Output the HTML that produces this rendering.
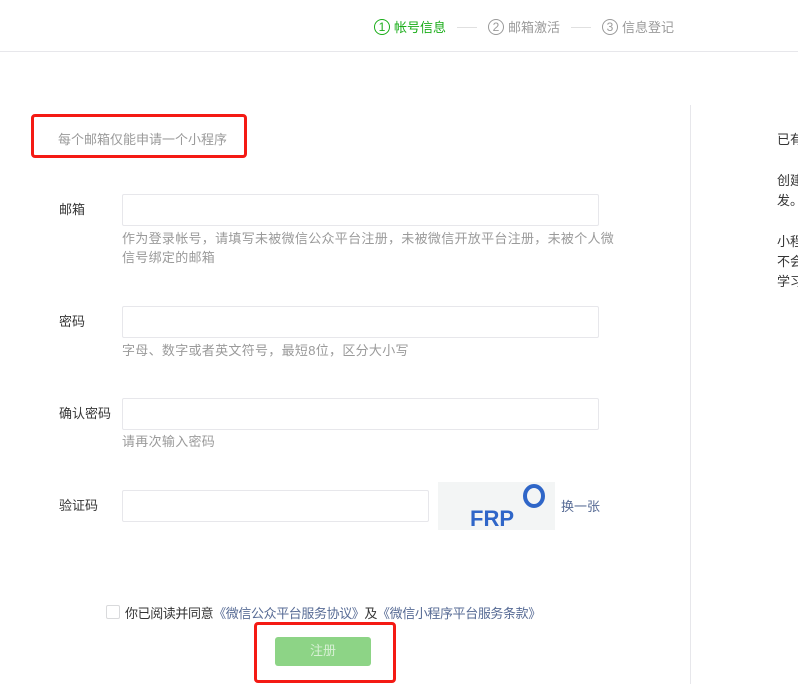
<!DOCTYPE html>
<html><head><meta charset="utf-8"><style>
*{margin:0;padding:0;box-sizing:border-box}
body{width:798px;height:684px;overflow:hidden;background:#fff;font-family:"Liberation Sans","Noto Sans CJK SC",sans-serif;font-size:13px;color:#353535;position:relative}
.a{position:absolute;white-space:nowrap}
.hd{position:absolute;left:0;top:0;width:798px;height:52px;border-bottom:1px solid #e7e7eb}
.step{position:absolute;top:17px;font-size:13px;color:#9a9a9a;display:flex;align-items:center}
.circ{display:inline-block;width:16px;height:16px;border:1px solid #9a9a9a;border-radius:50%;font-size:12px;line-height:14px;text-align:center;margin-right:4px}
.ln{position:absolute;top:27px;width:20px;height:1px;background:#e0e0e0}
.inp{position:absolute;border:1px solid #e7e7eb;border-radius:2px;height:32px;background:#fff}
.lab{position:absolute;left:59px;font-size:13px;color:#353535}
.tip{position:absolute;left:122px;color:#9a9a9a;font-size:13px;line-height:19px;letter-spacing:0.3px}
.red{position:absolute;border:3px solid #f41a14;border-radius:4px}
</style></head><body>
<div class="hd"></div>
<div class="step" style="left:374px;color:#1aad19"><span class="circ" style="border-color:#1aad19">1</span>帐号信息</div>
<div class="ln" style="left:457px"></div>
<div class="step" style="left:488px"><span class="circ">2</span>邮箱激活</div>
<div class="ln" style="left:571px"></div>
<div class="step" style="left:602px"><span class="circ">3</span>信息登记</div>

<div class="a" style="left:690px;top:105px;width:1px;height:579px;background:#e7e7eb"></div>
<div class="a" style="left:777px;top:129px">已有</div>
<div class="a" style="left:777px;top:171px;line-height:20px">创建<br>发。</div>
<div class="a" style="left:777px;top:232px;line-height:20px">小程<br>不会<br>学习</div>

<div class="red" style="left:31px;top:114px;width:216px;height:44px"></div>
<div class="a" style="left:58px;top:129px;color:#9a9a9a">每个邮箱仅能申请一个小程序</div>

<div class="lab" style="top:199px">邮箱</div>
<div class="inp" style="left:122px;top:194px;width:477px"></div>
<div class="tip" style="top:229px">作为登录帐号，请填写未被微信公众平台注册，未被微信开放平台注册，未被个人微<br>信号绑定的邮箱</div>

<div class="lab" style="top:311px">密码</div>
<div class="inp" style="left:122px;top:306px;width:477px"></div>
<div class="tip" style="top:341px">字母、数字或者英文符号，最短8位，区分大小写</div>

<div class="lab" style="top:403px">确认密码</div>
<div class="inp" style="left:122px;top:398px;width:477px"></div>
<div class="tip" style="top:432px">请再次输入密码</div>

<div class="lab" style="top:495px">验证码</div>
<div class="inp" style="left:122px;top:490px;width:307px"></div>
<div class="a" style="left:438px;top:482px;width:117px;height:48px;background:#f3f5f5">
<svg width="117" height="48"><text x="32" y="44" font-family="Liberation Sans" font-weight="bold" font-size="22" fill="#2f66c8">FRP</text><ellipse cx="96" cy="14" rx="9" ry="10" fill="none" stroke="#2f66c8" stroke-width="4"/></svg></div>
<div class="a" style="left:561px;top:496px;color:#576b95">换一张</div>

<div class="a" style="left:106px;top:605px;width:14px;height:14px;border:1px solid #d9dadc;border-radius:2px"></div>
<div class="a" style="left:125px;top:603px;letter-spacing:-0.4px">你已阅读并同意<span style="color:#576b95">《微信公众平台服务协议》</span>及<span style="color:#576b95">《微信小程序平台服务条款》</span></div>

<div class="red" style="left:254px;top:622px;width:142px;height:61px"></div>
<div class="a" style="left:275px;top:637px;width:96px;height:29px;background:#8dd486;border-radius:3px;color:#d7f0d4;text-align:center;line-height:28px">注册</div>
</body></html>
